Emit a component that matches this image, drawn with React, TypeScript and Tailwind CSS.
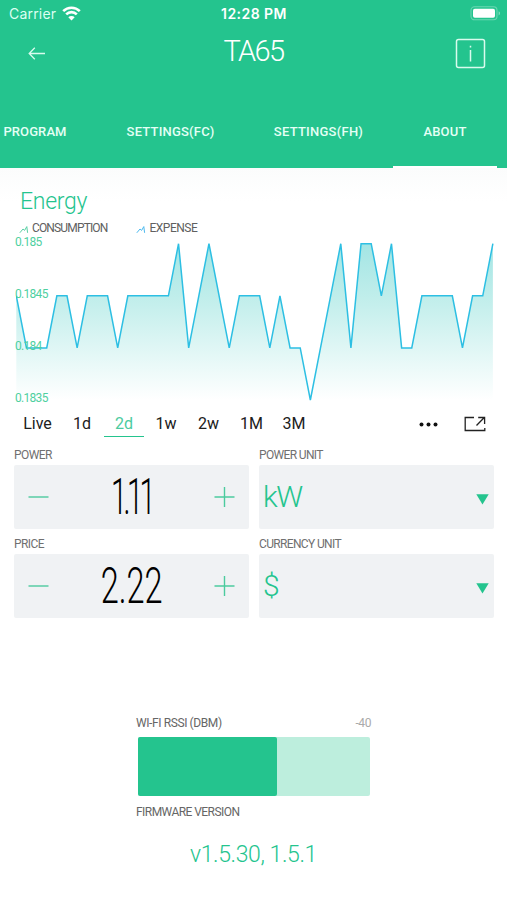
// src/App.tsx
import { useState } from 'react';

interface Tab {
    label: string;
    className: string;
}

const tabs: Tab[] = [
    { label: 'PROGRAM', className: '-ml-[27px] w-[124px] tracking-[0.1px]' },
    { label: 'SETTINGS(FC)', className: 'w-[147px] tracking-[0.2px]' },
    { label: 'SETTINGS(FH)', className: 'w-[149px] tracking-[0.25px]' },
    { label: 'ABOUT', className: 'w-[104px] tracking-[0.2px]' },
];

const ranges = [
    { label: 'Live', className: 'w-[45px]' },
    { label: '1d', className: 'w-[44px]' },
    { label: '2d', className: 'w-[40px]' },
    { label: '1w', className: 'w-[44px]' },
    { label: '2w', className: 'w-[41px]' },
    { label: '1M', className: 'w-[45px]' },
    { label: '3M', className: 'w-[40px]' },
];

const axisLabels = ['0.185', '0.1845', '0.184', '0.1835'];

// 0 = 0.1835, 3 = 0.185
const samples = [
    2, 1, 1, 1, 2, 2, 1, 2, 2, 2, 1, 2, 2, 2, 2, 2,
    3, 1, 2, 3, 2, 1, 2, 2, 2, 1, 2, 1, 1, 0, 1, 2,
    3, 1, 3, 3, 2, 3, 1, 1, 2, 2, 2, 2, 1, 2, 2, 3,
];

const points = samples.map((s, i) => `${(i * 10.14 + 0.3).toFixed(2)},${160 - s * 52.1}`).join(' ');

function EnergyChart() {
    return (
        <div className="relative ml-4 h-[168px] w-[478px]">
            <svg width="478" height="168" viewBox="0 0 478 168" fill="none" className="block">
                <defs>
                    <linearGradient id="area" x1="0" y1="4" x2="0" y2="160" gradientUnits="userSpaceOnUse">
                        <stop offset="0" stopColor="#a3e5e4" />
                        <stop offset="0.35" stopColor="#c1eeeb" />
                        <stop offset="1" stopColor="#ffffff" />
                    </linearGradient>
                </defs>
                <polygon points={`0.3,160 ${points} 476.9,160`} fill="url(#area)" />
                <polyline points={points} stroke="#2dbfe3" strokeWidth="1.5" />
            </svg>
            <div className="absolute top-[-6px] left-[-1px] flex flex-col text-[12px] leading-[16px] tracking-[-0.7px] text-[#4fd09f]">
                {axisLabels.map((label) => (
                    <span key={label} className="h-[52px]">{label}</span>
                ))}
            </div>
        </div>
    );
}

function Legend({ color, label }: { color: string; label: string }) {
    return (
        <div className="flex items-center gap-[3px]">
            <svg width="10" height="9" viewBox="0 0 10 9" fill="none" stroke={color} strokeWidth="1" className="mt-[2px]">
                <path d="M0.8 7.8 L4 4 L5.6 5.4 L7.8 1.6 L8.6 7.8" />
            </svg>
            <span>{label}</span>
        </div>
    );
}

interface StepperProps {
    label: string;
    value: number;
    onChange: (value: number) => void;
    valueClass: string;
}

function Stepper({ label, value, onChange, valueClass }: StepperProps) {
    return (
        <div className="w-[235px]">
            <div className="h-[19px] text-[12px] leading-[19px] tracking-[-0.55px] text-[#707070]">{label}</div>
            <div className="flex h-[64px] items-center justify-between rounded-[2px] bg-[#f0f2f4] px-[14px]">
                <button onClick={() => onChange(value - 0.01)} aria-label="minus">
                    <svg width="21" height="21" viewBox="0 0 21 21" stroke="#4ccb9e" strokeWidth="1.4">
                        <path d="M0.5 10 H20.5" />
                    </svg>
                </button>
                <span className={`text-[50px] leading-[64px] font-light text-black ${valueClass}`}>{value.toFixed(2)}</span>
                <button onClick={() => onChange(value + 0.01)} aria-label="plus">
                    <svg width="21" height="21" viewBox="0 0 21 21" stroke="#4ccb9e" strokeWidth="1.4">
                        <path d="M0.5 10 H20.5 M10.5 0 V20" />
                    </svg>
                </button>
            </div>
        </div>
    );
}

function UnitSelect({ label, value }: { label: string; value: string }) {
    return (
        <div className="w-[235px]">
            <div className="h-[19px] text-[12px] leading-[19px] tracking-[-0.65px] text-[#707070]">{label}</div>
            <div className="flex h-[64px] items-center justify-between rounded-[2px] bg-[#f0f2f4] pr-[5px] pl-[4px]">
                <span className="text-[30px] leading-[64px] font-light tracking-[-1.5px] text-[#24c48e]">{value}</span>
                <svg width="13" height="11" viewBox="0 0 13 11" className="mt-1" fill="#24c48e">
                    <path d="M0.3 0.3 H12.7 L6.5 10.5 Z" />
                </svg>
            </div>
        </div>
    );
}

export default function App() {
    const [activeTab, setActiveTab] = useState('ABOUT');
    const [range, setRange] = useState('2d');
    const [power, setPower] = useState(1.11);
    const [price, setPrice] = useState(2.22);

    return (
        <main className="h-[900px] w-[507px] overflow-hidden bg-white font-['Roboto',sans-serif]">
            <header className="flex h-[168px] flex-col bg-[#24c48e] text-white">
                <div className="grid h-[27px] grid-cols-3 items-center pr-[6px] pl-[9px] font-['Inter',sans-serif] text-[14px] text-[#dcfff2]">
                    <div className="flex items-center gap-[6px]">
                        <span className="tracking-[0.2px]">Carrier</span>
                        <svg width="19" height="15" viewBox="0 0 19 15" fill="none" stroke="#fff" strokeWidth="2.6">
                            <path d="M1.2 5.2 A11.8 11.8 0 0 1 17.8 5.2" />
                            <path d="M4.2 8.4 A7.4 7.4 0 0 1 14.8 8.4" />
                            <path d="M9.5 14.5 L6.3 11.2 A4.6 4.6 0 0 1 12.7 11.2 Z" fill="#fff" stroke="none" />
                        </svg>
                    </div>
                    <span className="-ml-[2px] text-center text-[14px] font-semibold tracking-[0.45px] text-white">12:28 PM</span>
                    <svg width="31" height="15" viewBox="0 0 31 15" className="justify-self-end" fill="none">
                        <rect x="1" y="0.8" width="26" height="13" rx="3.5" stroke="#6bd6b2" strokeWidth="1.1" />
                        <rect x="3" y="2.8" width="22" height="9" rx="1.8" fill="#fff" />
                        <path d="M28.7 5.2 V9.4 C30.3 8.7 30.3 5.9 28.7 5.2 Z" fill="#8fe2c4" />
                    </svg>
                </div>
                <div className="flex h-[52px] items-center justify-between pr-[21px] pl-[28px]">
                    <button aria-label="back" className="w-[24px]">
                        <svg width="18" height="13" viewBox="0 0 18 13" fill="none" stroke="#d9fbee" strokeWidth="1.3">
                            <path d="M17 6.5 H1.2 M6.8 0.8 L1.2 6.5 L6.8 12.2" />
                        </svg>
                    </button>
                    <h1 className="-mt-1 text-[29px] leading-none font-light tracking-[-1.6px]">TA65</h1>
                    <button aria-label="info">
                        <svg width="31" height="31" viewBox="0 0 31 31" fill="none" stroke="#d9fbee" strokeWidth="1.5">
                            <rect x="1.5" y="1.5" width="28" height="28" rx="2" />
                            <path d="M15.5 12 V23.5 M15.5 7.7 V9.5" />
                        </svg>
                    </button>
                </div>
                <nav className="flex flex-1 text-[13px] font-medium text-[#e4fff5]">
                    {tabs.map((tab) => (
                        <button
                            key={tab.label}
                            onClick={() => setActiveTab(tab.label)}
                            className={`flex shrink-0 items-center justify-center border-b-2 pt-[18px] ${tab.className} ${activeTab === tab.label ? 'border-white' : 'border-transparent'}`}
                        >
                            {tab.label}
                        </button>
                    ))}
                </nav>
            </header>

            <section className="h-[278px] bg-linear-to-b from-[#fbfcfc] to-white to-12% pt-[18px]">
                <h2 className="h-[31px] pl-[20px] text-[23px] leading-[32px] font-light tracking-[-0.3px] text-[#24c48e]">Energy</h2>
                <div className="flex h-[23px] items-start gap-[29px] pl-[19px] text-[12px] leading-[22px] text-[#606060]">
                    <div className="tracking-[-0.85px]">
                        <Legend color="#57cfa3" label="CONSUMPTION" />
                    </div>
                    <div className="tracking-[-0.5px]">
                        <Legend color="#4bb9ee" label="EXPENSE" />
                    </div>
                </div>
                <EnergyChart />
                <div className="flex h-[30px] items-center pr-[21px] pl-[15px] text-[16px] text-[#202020]">
                    {ranges.map((r) => (
                        <button
                            key={r.label}
                            onClick={() => setRange(r.label)}
                            className={`h-[27px] border-b pt-[2px] ${r.className} ${range === r.label ? 'border-[#24c48e] text-[#4ccb9e]' : 'border-transparent'}`}
                        >
                            {r.label}
                        </button>
                    ))}
                    <svg width="19" height="5" viewBox="0 0 19 5" className="mt-[2px] ml-auto" fill="#111">
                        <circle cx="2.5" cy="2.5" r="2" />
                        <circle cx="9.5" cy="2.5" r="2" />
                        <circle cx="16.5" cy="2.5" r="2" />
                    </svg>
                    <svg width="22" height="16" viewBox="0 0 22 16" className="mt-[2px] ml-[26px]" fill="none" stroke="#222" strokeWidth="1.3">
                        <path d="M10 1.5 H1.2 V14.5 H20.8 V12 M12.5 9.5 L20.3 1.5 M14.2 1.5 H20.6 V8" />
                    </svg>
                </div>
            </section>

            <section className="grid grid-cols-[235px_235px] gap-x-[10px] gap-y-[6px] pl-[14px]">
                <Stepper label="POWER" value={power} onChange={setPower} valueClass="scale-x-[0.58] tracking-[-6px]" />
                <UnitSelect label="POWER UNIT" value="kW" />
                <Stepper label="PRICE" value={price} onChange={setPrice} valueClass="scale-x-[0.65]" />
                <UnitSelect label="CURRENCY UNIT" value="$" />
            </section>

            <section className="mx-auto mt-[95px] w-[235px] text-[12px] tracking-[-0.4px] text-[#666]">
                <div className="flex h-[24px] items-start justify-between leading-[20px]">
                    <span>WI-FI RSSI (DBM)</span>
                    <span className="text-[#aaa]">-40</span>
                </div>
                <div className="mr-px ml-[2px] h-[59px] overflow-hidden rounded-[2px] bg-[#bdeedd]">
                    <div className="h-full w-[139px] rounded-r-[2px] bg-[#24c48e]" />
                </div>
                <div className="mt-[6px] leading-[20px] tracking-[-0.55px]">FIRMWARE VERSION</div>
                <p className="mt-[17px] text-center text-[23px] leading-[32px] font-light tracking-[-0.4px] text-[#24c48e]">v1.5.30, 1.5.1</p>
            </section>
        </main>
    );
}
